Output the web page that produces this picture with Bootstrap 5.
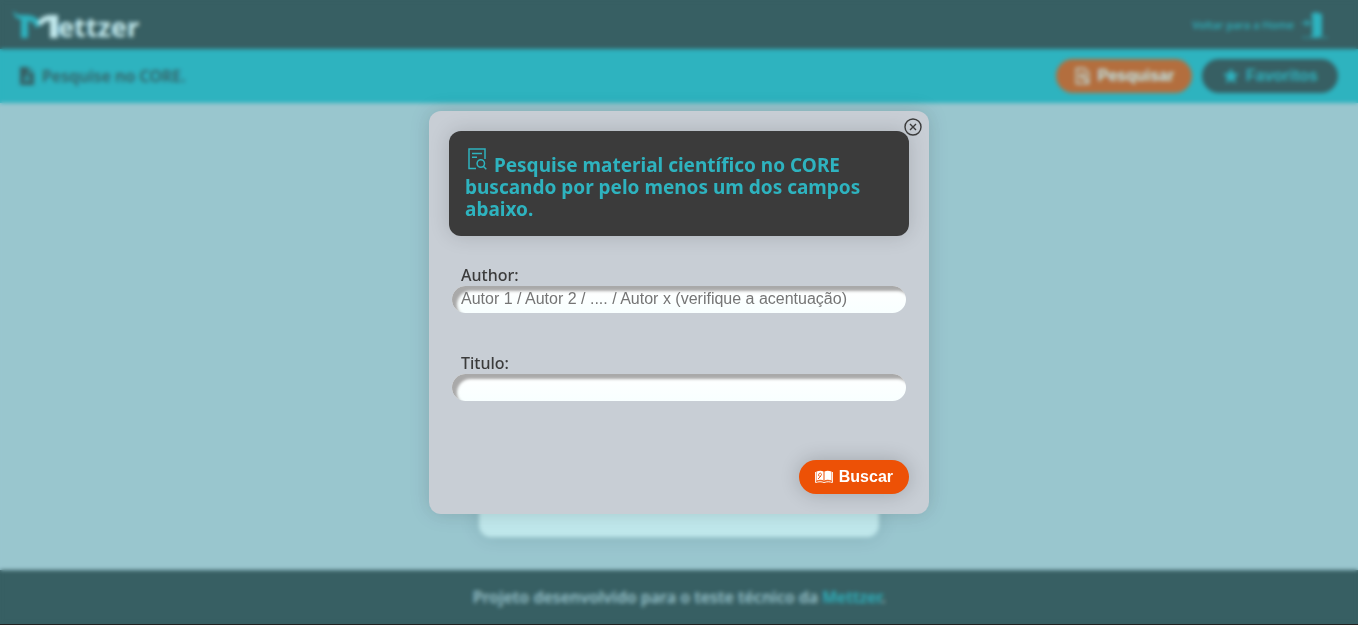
<!DOCTYPE html>
<html lang="pt-BR">
<head>
<meta charset="utf-8">
<meta name="viewport" content="width=device-width, initial-scale=1">
<title>Mettzer - Pesquise no CORE</title>
<link href="https://cdn.jsdelivr.net/npm/bootstrap@5.3.0/dist/css/bootstrap.min.css" rel="stylesheet">
<style>
  :root { --teal: #2eb3bf; --dark: #3b3b3b; --mist: #c8ced5; --orange: #ed5106; }
  body { font-family: "Noto Sans", sans-serif; background: var(--mist); color: var(--dark); line-height: 22px; }
  a { text-decoration: none; color: var(--teal); }
  .page { border-bottom: 1px solid #222; }
  .top-bar { background: var(--dark); min-height: 49px; }
  .brand { color: #fff; font-size: 27px; font-weight: 700; line-height: 38px; padding-top: 4px; }
  .brand svg { margin-top: -6px; }
  .home-link { font-size: 11px; font-weight: 500; }
  .search-bar { background: var(--teal); min-height: 54px; }
  .search-bar h1 { font-size: 16px; font-weight: 600; line-height: 22px; }
  .pill { font: bold 16px/18px "Liberation Sans", Arial, sans-serif; border: 0; border-radius: 17px; padding: 8px 16px; box-shadow: 0 0 20px rgba(0,0,0,.2); gap: 6px; }
  .pill-row { gap: 10px; }
  .pill-row .pill { min-width: 136px; box-shadow: none; }
  .pill-orange { background: var(--orange); color: #fff; }
  .pill-dark { background: var(--dark); color: var(--teal); }
  .result-panel { width: 400px; max-width: 100%; min-height: 400px; margin-bottom: 33px; background: #fff; border-radius: 12px; box-shadow: 0 0 20px rgba(0,0,0,.15); }
  .page-footer { background: var(--dark); color: var(--mist); min-height: 54px; font-weight: 600; }
  .veil { position: fixed; inset: 0 0 1px; background: rgba(46,179,191,.3); backdrop-filter: blur(2px); }
  .dialog-box { width: 500px; max-width: 100%; padding: 20px; background: var(--mist); border-radius: 12px; box-shadow: 0 0 20px rgba(0,0,0,.15); }
  .dialog-title { background: var(--dark); color: var(--teal); font-size: 19px; font-weight: 700; line-height: 22px; padding: 16px; border-radius: 12px; box-shadow: 0 0 20px rgba(0,0,0,.15); margin-bottom: 28px; }
  .dialog-title svg { vertical-align: baseline; margin-bottom: 1px; }
  .close-x { top: 6px; right: 6px; line-height: 0; color: var(--dark); }
  .field { margin: 0 3px 39px; }
  .field label { padding-left: 9px; font-weight: 500; }
  .field input { height: 27px; border: 0; border-radius: 14px; padding: 0 9px; font: 16px "Liberation Sans", Arial, sans-serif; box-shadow: inset 5px 5px 3px #a9a9a9; background: linear-gradient(#fff, #f8ffff); }
  .field input::placeholder { color: #757575; }
  .actions { margin-top: 59px; }
</style>
</head>
<body>
<div class="page d-flex flex-column min-vh-100">
  <header class="top-bar d-flex justify-content-between align-items-center ps-2 pe-4">
    <a href="#" class="brand d-flex align-items-center">
      <svg width="50" height="36" viewBox="0 0 50 36" aria-hidden="true">
        <path d="M5 4C6 11 9 13 13 13v19h7V15c4 0 6 2 8 7l6-4C30 12 25 9 18 9 12 9 8 10 5 4z" fill="#2eb3bf"/>
        <path d="M29 17c4-6 8-8 14-8h7v23h-8V15c-4 0-7 2-9 5z" fill="#fff"/>
      </svg>
      <span>ettzer</span>
    </a>
    <a href="#" class="home-link d-flex align-items-center gap-2">Voltar para a Home
      <svg width="32" height="30" viewBox="0 0 32 30" fill="currentColor" aria-hidden="true"><path d="M9 4h3v23H9v-2h1V6H9zM0 12h4V9l5 4-5 4v-3H0zM0 27h26v1H0z" opacity=".8"/><path d="M10 4l3-2 7 2v22l-8 2z"/></svg>
    </a>
  </header>
  <section class="search-bar d-flex justify-content-between align-items-center px-3">
    <h1 class="d-flex align-items-center m-0">
      <svg width="22" height="22" viewBox="0 0 22 22" class="me-1" aria-hidden="true"><path d="M4 2h9l5 5v13H4z" fill="#3b3b3b"/><path d="M13 2v5h5M8 17l3-7 3 5H9" fill="none" stroke="#2eb3bf" stroke-width="1.300"/></svg>Pesquise no CORE.
    </h1>
    <div class="pill-row d-flex me-1">
      <button type="button" class="pill pill-orange d-flex justify-content-center align-items-center"><svg width="18" height="18" viewBox="0 0 18 18" fill="none" stroke="currentColor" stroke-width="1.400" aria-hidden="true"><path d="M2.500 1.500h8l4 4v11h-12z"/><circle cx="8.500" cy="9" r="2.500"/><path d="M10 11l4 4"/></svg>Pesquisar</button>
      <button type="button" class="pill pill-dark d-flex justify-content-center align-items-center"><svg width="18" height="18" viewBox="0 0 18 18" fill="currentColor" aria-hidden="true"><path d="M9 1l2.300 5.300 5.700.5-4.300 3.800 1.300 5.600L9 13.200l-5 3 1.300-5.600L1 6.800l5.700-.5z"/></svg>Favoritos</button>
    </div>
  </section>
  <main class="flex-grow-1 d-flex justify-content-center align-items-end"><div class="result-panel"></div></main>
  <footer class="page-footer d-flex justify-content-center align-items-center"><p class="m-0">Projeto desenvolvido para o teste técnico da <a href="#">Mettzer</a>.</p></footer>
</div>

<div class="veil d-flex justify-content-center align-items-center">
  <div class="dialog-box position-relative" role="dialog" aria-modal="true" aria-labelledby="dialogTitle">
    <button type="button" class="close-x btn p-0 border-0 position-absolute" aria-label="Fechar"><svg width="20" height="20" viewBox="0 0 20 20" fill="none" stroke="currentColor" stroke-width="1.400"><circle cx="10" cy="10" r="8"/><path d="M7 7l6 6M13 7l-6 6"/></svg></button>
    <h2 id="dialogTitle" class="dialog-title"><svg width="24" height="24" viewBox="0 0 24 24" fill="none" stroke="currentColor" stroke-width="1.500" aria-hidden="true"><path d="M11 21.500H4V2h16v10M7 6.500h10M7 10.200h5"/><circle cx="15.800" cy="16.500" r="3.700"/><path d="M18.300 19.200l3 3"/></svg> Pesquise material científico no CORE buscando por pelo menos um dos campos abaixo.</h2>
    <form>
      <div class="field"><label for="author" class="d-block">Author:</label><input id="author" type="text" class="d-block w-100" placeholder="Autor 1 / Autor 2 / .... / Autor x (verifique a acentuação)"></div>
      <div class="field"><label for="titulo" class="d-block">Titulo:</label><input id="titulo" type="text" class="d-block w-100"></div>
      <div class="actions d-flex justify-content-end">
        <button type="button" class="pill pill-orange d-flex align-items-center"><svg width="18" height="18" viewBox="0 0 18 18" fill="currentColor" aria-hidden="true"><path d="M1.500 3.500c3-1 5-1 7 0V13c-2-1-4-1-7 0zM9.500 3.500c2-1 4-1 7 0V13c-3-1-5-1-7 0z"/><path d="M.6 4v10.500c3-1 6-1 8.400 0 3-1 5.500-1 8.400 0V4" fill="none" stroke="currentColor"/><path d="M3 11l3-3M3.500 7.500c0-3 3-3 3-1s-3 2-3 1M1.500 13c3-1 5-1 7 0M9.500 13c2-1 4-1 7 0" fill="none" stroke="#ed5106" stroke-width=".9"/></svg>Buscar</button>
      </div>
    </form>
  </div>
</div>
<script src="https://cdn.jsdelivr.net/npm/bootstrap@5.3.0/dist/js/bootstrap.bundle.min.js"></script>
</body>
</html>
